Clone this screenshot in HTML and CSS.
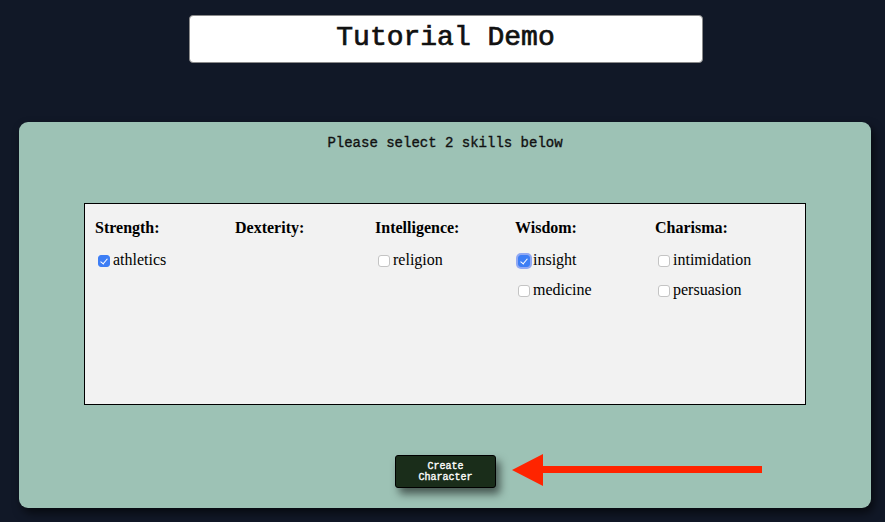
FILE: index.html
```
<!DOCTYPE html>
<html>
<head>
<meta charset="utf-8">
<link rel="stylesheet" href="styles.css">
</head>
<body>
<header class="top">
  <h1 class="title">Tutorial Demo</h1>
</header>
<main class="panel">
  <p class="prompt">Please select 2 skills below</p>
  <section class="skills">
    <div class="col">
      <h3 class="stat">Strength:</h3>
      <label class="skill"><input type="checkbox" checked>athletics</label>
    </div>
    <div class="col">
      <h3 class="stat">Dexterity:</h3>
    </div>
    <div class="col">
      <h3 class="stat">Intelligence:</h3>
      <label class="skill"><input type="checkbox">religion</label>
    </div>
    <div class="col">
      <h3 class="stat">Wisdom:</h3>
      <label class="skill"><input type="checkbox" class="focused" checked>insight</label>
      <label class="skill"><input type="checkbox">medicine</label>
    </div>
    <div class="col">
      <h3 class="stat">Charisma:</h3>
      <label class="skill"><input type="checkbox">intimidation</label>
      <label class="skill"><input type="checkbox">persuasion</label>
    </div>
  </section>
  <div class="actions">
    <button class="create">Create<br>Character</button>
    <svg class="arrow" width="252" height="34" viewBox="0 0 252 34">
      <polygon points="0,17 31,1 31,33" fill="#ff2400"/>
      <rect x="28" y="13" width="222" height="7" fill="#ff2400"/>
    </svg>
  </div>
</main>
</body>
</html>
```
FILE: styles.css
```
* { box-sizing: border-box; }
html, body { margin: 0; padding: 0; }
body {
  background: #111827;
  width: 885px;
  height: 522px;
  overflow: hidden;
  font-family: "Liberation Serif", serif;
}
.top {
  display: flex;
  justify-content: center;
  padding-top: 15px;
  padding-left: 6px;
}
.title {
  margin: 0;
  width: 514px;
  height: 48px;
  background: #fff;
  border: 1px solid #8a8a8a;
  border-radius: 4px;
  font-family: "Liberation Mono", monospace;
  font-weight: normal;
  font-size: 28px;
  line-height: 44px;
  text-align: center;
  color: #111;
  -webkit-text-stroke: 0.7px #111;
}
.panel {
  margin: 59px 14px 0 19px;
  height: 386px;
  background: #9dc2b5;
  border-radius: 9px;
  box-shadow: 3px 5px 10px rgba(0,0,0,0.6);
  padding-top: 11px;
}
.prompt {
  margin: 0;
  text-align: center;
  font-family: "Liberation Mono", monospace;
  font-size: 14px;
  line-height: 20px;
  color: #111;
  -webkit-text-stroke: 0.35px #111;
}
.skills {
  margin: 50px 0 0 65px;
  width: 722px;
  height: 202px;
  background: #f2f2f2;
  border: 1px solid #000;
  padding: 13px 10px 12px;
  display: grid;
  grid-template-columns: repeat(5, 140px);
}
.col { display: flex; flex-direction: column; }
.stat {
  margin: 0 0 6px;
  font-size: 16px;
  line-height: 22px;
  font-weight: bold;
  color: #000;
}
.skill {
  display: flex;
  align-items: center;
  height: 30px;
  font-size: 16px;
  color: #000;
  padding-left: 3px;
}
.skill input {
  -webkit-appearance: none;
  appearance: none;
  width: 12px;
  height: 12px;
  margin: 1px 3px 0 0;
  border: 1px solid #c4c4c4;
  border-radius: 3px;
  background: #fff;
  position: relative;
}
.skill input:checked {
  background: #3d7ef5;
  border-color: #3d7ef5;
}
.skill input:checked::after {
  content: "";
  position: absolute;
  left: 3px;
  top: 1px;
  width: 3px;
  height: 6px;
  border: solid #fff;
  border-width: 0 1.5px 1.5px 0;
  transform: rotate(40deg);
}
.skill input.focused {
  box-shadow: 0 0 0 2px rgba(80,120,245,0.6);
}
.actions {
  display: flex;
  align-items: center;
  margin: 50px 0 0 376px;
  gap: 16px;
}
.create {
  width: 101px;
  height: 33px;
  background: #1a2d1a;
  border: 1px solid #000;
  border-radius: 3px;
  color: #fff;
  font-family: "Liberation Mono", monospace;
  font-size: 10px;
  line-height: 11px;
  padding: 0;
  box-shadow: 4px 6px 8px rgba(0,0,0,0.55);
  -webkit-text-stroke: 0.35px #fff;
}
.arrow { display: block; margin-top: -3px; }
```
